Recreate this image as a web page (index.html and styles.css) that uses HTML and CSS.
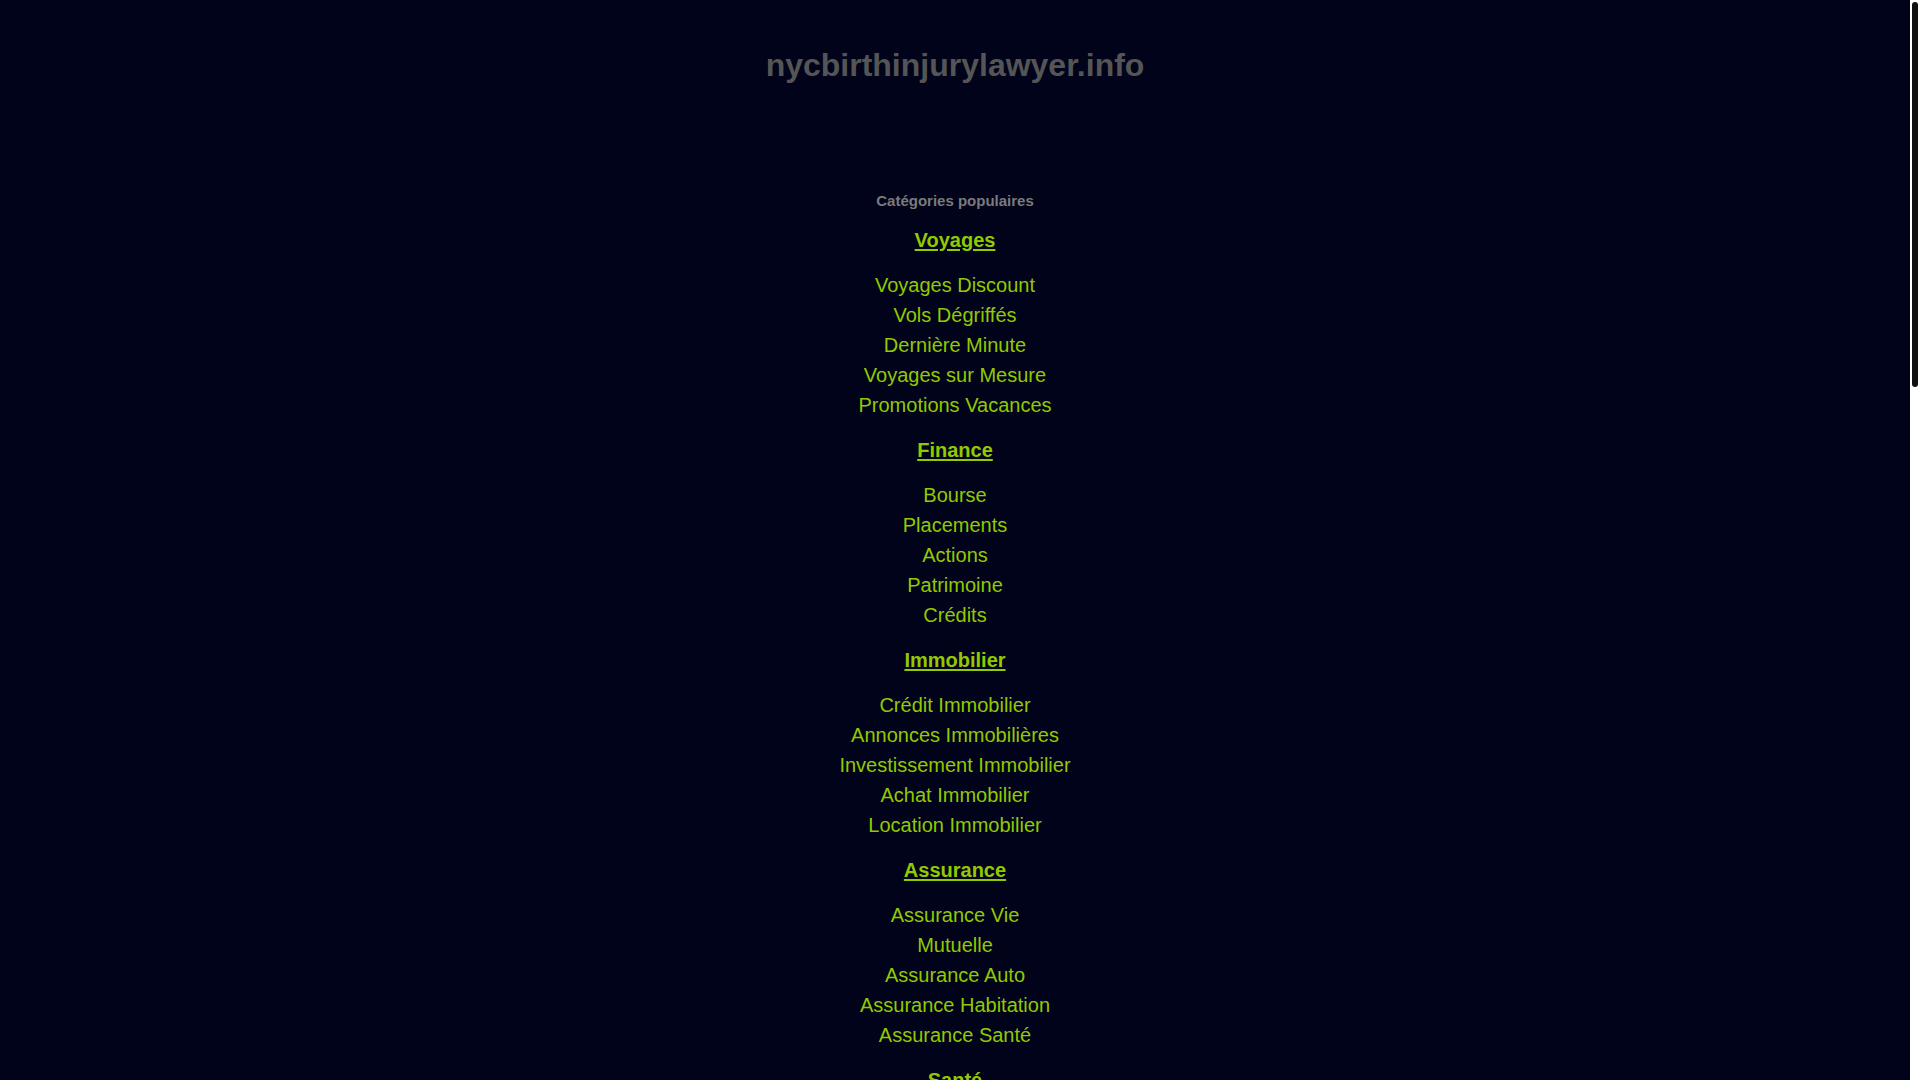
FILE: index.html
```html
<!DOCTYPE html>
<html lang="fr">
<head>
<meta charset="utf-8">
<title>nycbirthinjurylawyer.info</title>
<link rel="stylesheet" href="styles.css">
</head>
<body>
<div class="frame">
<div class="page">
  <header class="header">
    <h1 class="domain">nycbirthinjurylawyer.info</h1>
  </header>
  <main class="cats">
    <h2 class="cats-title">Catégories populaires</h2>

    <section class="cat">
      <h3 class="cat-head"><a href="#">Voyages</a></h3>
      <ul class="cat-list">
        <li><a href="#">Voyages Discount</a></li>
        <li><a href="#">Vols Dégriffés</a></li>
        <li><a href="#">Dernière Minute</a></li>
        <li><a href="#">Voyages sur Mesure</a></li>
        <li><a href="#">Promotions Vacances</a></li>
      </ul>
    </section>

    <section class="cat">
      <h3 class="cat-head"><a href="#">Finance</a></h3>
      <ul class="cat-list">
        <li><a href="#">Bourse</a></li>
        <li><a href="#">Placements</a></li>
        <li><a href="#">Actions</a></li>
        <li><a href="#">Patrimoine</a></li>
        <li><a href="#">Crédits</a></li>
      </ul>
    </section>

    <section class="cat">
      <h3 class="cat-head"><a href="#">Immobilier</a></h3>
      <ul class="cat-list">
        <li><a href="#">Crédit Immobilier</a></li>
        <li><a href="#">Annonces Immobilières</a></li>
        <li><a href="#">Investissement Immobilier</a></li>
        <li><a href="#">Achat Immobilier</a></li>
        <li><a href="#">Location Immobilier</a></li>
      </ul>
    </section>

    <section class="cat">
      <h3 class="cat-head"><a href="#">Assurance</a></h3>
      <ul class="cat-list">
        <li><a href="#">Assurance Vie</a></li>
        <li><a href="#">Mutuelle</a></li>
        <li><a href="#">Assurance Auto</a></li>
        <li><a href="#">Assurance Habitation</a></li>
        <li><a href="#">Assurance Santé</a></li>
      </ul>
    </section>

    <section class="cat">
      <h3 class="cat-head"><a href="#">Santé</a></h3>
      <ul class="cat-list">
        <li><a href="#">Médecine</a></li>
        <li><a href="#">Bien-être</a></li>
        <li><a href="#">Nutrition</a></li>
        <li><a href="#">Beauté</a></li>
        <li><a href="#">Forme</a></li>
      </ul>
    </section>

    <section class="cat">
      <h3 class="cat-head"><a href="#">Automobile</a></h3>
      <ul class="cat-list">
        <li><a href="#">Voitures Neuves</a></li>
        <li><a href="#">Voitures d'Occasion</a></li>
        <li><a href="#">Location de Voitures</a></li>
        <li><a href="#">Crédit Auto</a></li>
        <li><a href="#">Pièces Auto</a></li>
      </ul>
    </section>

    <section class="cat">
      <h3 class="cat-head"><a href="#">Emploi</a></h3>
      <ul class="cat-list">
        <li><a href="#">Offres d'Emploi</a></li>
        <li><a href="#">Formation</a></li>
        <li><a href="#">Intérim</a></li>
        <li><a href="#">Carrière</a></li>
        <li><a href="#">Recrutement</a></li>
      </ul>
    </section>

    <section class="cat">
      <h3 class="cat-head"><a href="#">Maison</a></h3>
      <ul class="cat-list">
        <li><a href="#">Décoration</a></li>
        <li><a href="#">Jardinage</a></li>
        <li><a href="#">Bricolage</a></li>
        <li><a href="#">Meubles</a></li>
        <li><a href="#">Électroménager</a></li>
      </ul>
    </section>

    <section class="cat">
      <h3 class="cat-head"><a href="#">Loisirs</a></h3>
      <ul class="cat-list">
        <li><a href="#">Sport</a></li>
        <li><a href="#">Musique</a></li>
        <li><a href="#">Cinéma</a></li>
        <li><a href="#">Jeux</a></li>
        <li><a href="#">Livres</a></li>
      </ul>
    </section>

    <section class="cat">
      <h3 class="cat-head"><a href="#">Shopping</a></h3>
      <ul class="cat-list">
        <li><a href="#">Mode</a></li>
        <li><a href="#">Chaussures</a></li>
        <li><a href="#">Bijoux</a></li>
        <li><a href="#">High-Tech</a></li>
        <li><a href="#">Cadeaux</a></li>
      </ul>
    </section>

    <section class="cat">
      <h3 class="cat-head"><a href="#">Internet</a></h3>
      <ul class="cat-list">
        <li><a href="#">Hébergement Web</a></li>
        <li><a href="#">Noms de Domaine</a></li>
        <li><a href="#">Création de Site</a></li>
        <li><a href="#">Téléphonie Mobile</a></li>
        <li><a href="#">Fournisseurs Internet</a></li>
      </ul>
    </section>

    <section class="cat">
      <h3 class="cat-head"><a href="#">Rencontres</a></h3>
      <ul class="cat-list">
        <li><a href="#">Sites de Rencontre</a></li>
        <li><a href="#">Célibataires</a></li>
        <li><a href="#">Mariage</a></li>
        <li><a href="#">Amitié</a></li>
        <li><a href="#">Chat</a></li>
      </ul>
    </section>
  </main>
</div>
<div class="rail" aria-hidden="true"><div class="thumb"></div></div>
</div>
</body>
</html>
```

FILE: styles.css
```css
html {
  background: #00031a;
}

body {
  margin: 0;
  height: 100vh;
  overflow: hidden;
  background: #00031a;
  font-family: "Liberation Sans", Arial, sans-serif;
  color: #92c900;
}

.frame {
  display: flex;
  height: 100vh;
}

.page {
  flex: 1;
  height: 100vh;
  overflow-y: auto;
  text-align: center;
  scrollbar-width: none;
}

.page::-webkit-scrollbar {
  display: none;
}

.rail {
  width: 10px;
  flex: none;
  background: #ffffff;
  padding: 2px;
  box-sizing: border-box;
}

.thumb {
  height: 385px;
  background: #111111;
  border-radius: 3px;
}

.header {
  padding-top: 46px;
  height: 147px;
  box-sizing: border-box;
}

.domain {
  margin: 0;
  font-size: 32px;
  line-height: 38px;
  font-weight: bold;
  color: #555555;
}

.cats {
  display: flex;
  flex-direction: column;
  align-items: center;
  padding-bottom: 60px;
}

.cats-title {
  margin: 45px 0 18px;
  font-size: 15px;
  line-height: 18px;
  font-weight: bold;
  color: #7a7a7a;
}

.cat {
  display: flex;
  flex-direction: column;
  align-items: center;
}

.cat-head {
  margin: 0 0 18px;
  font-size: 20px;
  line-height: 24px;
  font-weight: bold;
}

.cat-head a {
  color: #92c900;
  text-decoration: underline;
  text-underline-offset: 2px;
}

.cat-list {
  list-style: none;
  margin: 0 0 18px;
  padding: 0;
}

.cat-list li {
  font-size: 20px;
  line-height: 30px;
}

.cat-list a {
  color: #92c900;
  text-decoration: none;
}
```
